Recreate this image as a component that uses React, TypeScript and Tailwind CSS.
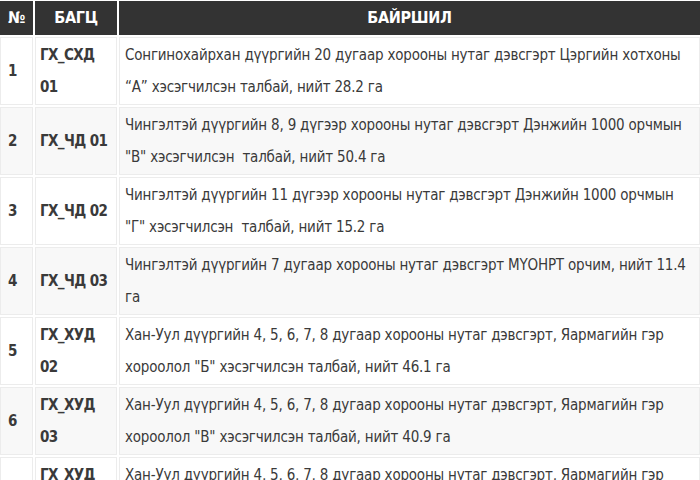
const rows = [
  {
    n: "1",
    code: ["ГХ_СХД", "01"],
    place: [
      "Сонгинохайрхан дүүргийн 20 дугаар хорооны нутаг дэвсгэрт Цэргийн хотхоны",
      "“А” хэсэгчилсэн талбай, нийт 28.2 га",
    ],
  },
  {
    n: "2",
    code: ["ГХ_ЧД 01"],
    place: [
      "Чингэлтэй дүүргийн 8, 9 дүгээр хорооны нутаг дэвсгэрт Дэнжийн 1000 орчмын",
      "\"В\" хэсэгчилсэн  талбай, нийт 50.4 га",
    ],
  },
  {
    n: "3",
    code: ["ГХ_ЧД 02"],
    place: [
      "Чингэлтэй дүүргийн 11 дүгээр хорооны нутаг дэвсгэрт Дэнжийн 1000 орчмын",
      "\"Г\" хэсэгчилсэн  талбай, нийт 15.2 га",
    ],
  },
  {
    n: "4",
    code: ["ГХ_ЧД 03"],
    place: [
      "Чингэлтэй дүүргийн 7 дугаар хорооны нутаг дэвсгэрт МҮОНРТ орчим, нийт 11.4",
      "га",
    ],
  },
  {
    n: "5",
    code: ["ГХ_ХУД", "02"],
    place: [
      "Хан-Уул дүүргийн 4, 5, 6, 7, 8 дугаар хорооны нутаг дэвсгэрт, Яармагийн гэр",
      "хороолол \"Б\" хэсэгчилсэн талбай, нийт 46.1 га",
    ],
  },
  {
    n: "6",
    code: ["ГХ_ХУД", "03"],
    place: [
      "Хан-Уул дүүргийн 4, 5, 6, 7, 8 дугаар хорооны нутаг дэвсгэрт, Яармагийн гэр",
      "хороолол \"В\" хэсэгчилсэн талбай, нийт 40.9 га",
    ],
  },
  {
    n: "7",
    code: ["ГХ_ХУД", "04"],
    place: [
      "Хан-Уул дүүргийн 4, 5, 6, 7, 8 дугаар хорооны нутаг дэвсгэрт, Яармагийн гэр",
      "хороолол \"Г\" хэсэгчилсэн талбай",
    ],
  },
]

function Lines({ lines }: { lines: string[] }) {
  return (
    <>
      {lines.map((l, i) => (
        <span key={i} className="block whitespace-pre">
          {l}
        </span>
      ))}
    </>
  )
}

export default function App() {
  return (
    <div
      className="h-[480px] w-[700px] overflow-hidden bg-white"
      style={{ fontFamily: '"DejaVu Sans Condensed", "DejaVu Sans", sans-serif' }}
    >
      <table className="table-fixed w-[704px] border-separate border-spacing-[2px] -mt-[1px] -ml-[2px] text-[15px] tracking-[-0.2px] text-[#3a3a3a]">
        <colgroup>
          <col className="w-[33px]" />
          <col className="w-[82px]" />
          <col />
        </colgroup>
        <thead>
          <tr className="text-[16px] tracking-[-0.3px]">
            <th className="h-[34px] bg-[#333] text-center font-bold text-white">№</th>
            <th className="bg-[#333] text-center font-bold text-white">БАГЦ</th>
            <th className="bg-[#333] text-center font-bold text-white">БАЙРШИЛ</th>
          </tr>
        </thead>
        <tbody>
          {rows.map((r, i) => {
            const bg = i % 2 === 1 ? "bg-[#f8f8f8]" : "bg-white"
            return (
              <tr key={r.n}>
                <td className={`${bg} border border-[#ececec] pl-[7px] py-px align-middle font-bold leading-[32px]`}>
                  {r.n}
                </td>
                <td className={`${bg} border border-[#ececec] px-[4px] py-px align-middle font-bold tracking-[-0.6px] leading-[32px]`}>
                  <Lines lines={r.code} />
                </td>
                <td className={`${bg} border border-[#ececec] px-[5px] py-px align-middle leading-[32px]`}>
                  <Lines lines={r.place} />
                </td>
              </tr>
            )
          })}
        </tbody>
      </table>
    </div>
  )
}
